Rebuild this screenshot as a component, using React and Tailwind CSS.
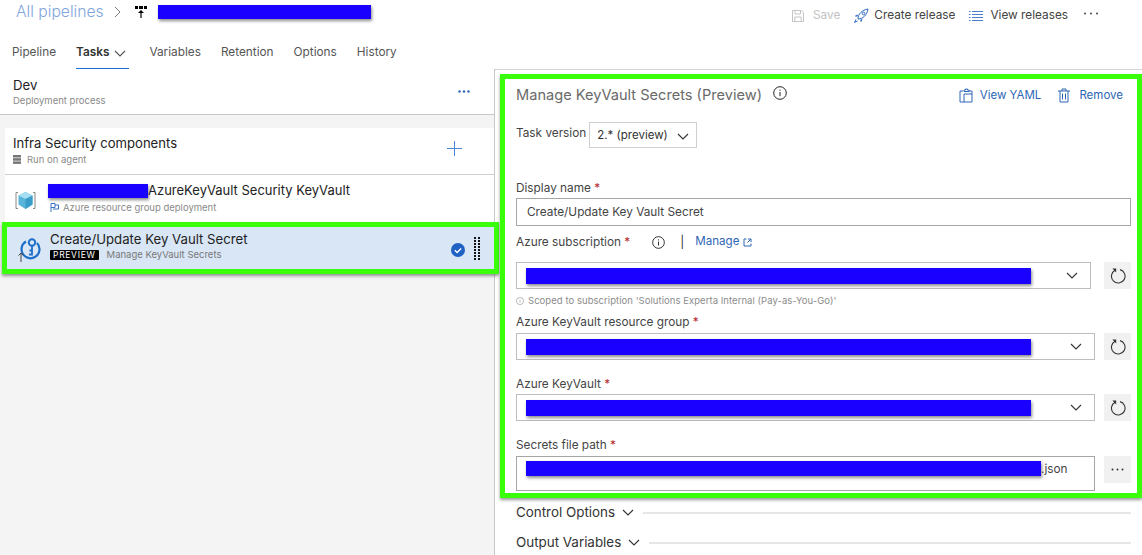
import React from "react";

const Bar = ({ w, h = "h-[16px]", className = "" }) => (
  <span className={`inline-block shrink-0 bg-[#1a00ff] shadow-[1px_2px_3px_rgba(0,0,0,0.45)] ${h} ${className}`} style={{ width: w }} />
);

const Chevron = ({ className = "", color = "#333" }) => (
  <svg width="12" height="7" viewBox="0 0 12 7" className={className} fill="none" stroke={color} strokeWidth="1.1">
    <path d="M1 1l5 5 5-5" />
  </svg>
);

const Info = ({ size = 14, color = "#222", className = "" }) => (
  <svg width={size} height={size} viewBox="0 0 14 14" className={className} fill="none" stroke={color} strokeWidth="1">
    <circle cx="7" cy="7" r="6.3" />
    <path d="M7 6v4.2M7 3.6v1.2" />
  </svg>
);

const Refresh = () => (
  <svg width="16" height="16" viewBox="0 0 16 16" fill="none" stroke="#333" strokeWidth="1.1">
    <path d="M5 2.200A6.800 6.800 0 1 0 10 1.600" />
    <path d="M2.400 0.600l3.800 0 0 3.800z" fill="#333" stroke="none" />
  </svg>
);

const Req = () => <span className="text-[#b3262a]"> *</span>;

const Label = ({ children, className = "" }) => (
  <div className={`text-[11.8px] leading-[16px] text-[#444] ${className}`}>{children}</div>
);

const SelectBox = ({ w, bar = 505 }) => (
  <div className="flex items-center h-[27px] border border-[#bdbdbd] pl-[9px] pr-[12px]" style={{ width: w }}>
    <Bar w={bar} />
    <Chevron className="ml-auto" />
  </div>
);

const SideBtn = ({ children }) => (
  <div className="ml-auto flex items-center justify-center w-[27px] h-[27px] bg-[#f1f1f1]">{children}</div>
);

const SelectRow = ({ w }) => (
  <div className="flex w-[615px]">
    <SelectBox w={w} />
    <SideBtn><Refresh /></SideBtn>
  </div>
);

const Section = ({ label, className = "" }) => (
  <div className={`flex items-center pl-[21px] pr-[11px] ${className}`}>
    <span className="text-[13.4px] leading-[18px] text-[#333]">{label}</span>
    <Chevron className="ml-[7px]" />
    <span className="flex-1 h-[2px] bg-[#e6e6e6] ml-[9px] mt-[2px]" />
  </div>
);

const Tab = ({ children, active }) => (
  <div className={`h-[39px] flex items-center pt-[8px] text-[11.8px] ${active ? "font-semibold text-[#333] border-b border-[#1f6fd1]" : "text-[#555] border-b border-transparent"}`}>
    {children}
  </div>
);

export default function App() {
  return (
    <div className="relative w-[1142px] h-[555px] overflow-hidden bg-white flex flex-col [font-family:Inter,'Liberation_Sans',sans-serif]">
      {/* breadcrumb bar */}
      <div className="flex items-center h-[30px] shrink-0 pl-[16px] pb-[6px]">
        <span className="text-[15.700px] font-light text-[#7fa6dc]">All pipelines</span>
        <svg width="7" height="12" viewBox="0 0 7 12" className="ml-[10px]" fill="none" stroke="#777" strokeWidth="1"><path d="M1 1l5 5-5 5" /></svg>
        <svg width="12" height="14" viewBox="0 0 12 14" className="ml-[14px]" fill="#000">
          <rect x="0" y="1" width="3" height="3" /><rect x="4" y="1" width="4" height="3" /><rect x="9" y="1" width="3" height="3" />
          <path d="M6 5l3 3H6.600v5H5.400V8H3z" />
        </svg>
        <Bar w={213} h="h-[14px]" className="ml-[11px]" />
        <div className="ml-auto flex items-center text-[11.800px] text-[#444] pr-[74px] pt-[8px] relative">
          <svg width="14" height="14" viewBox="0 0 14 14" fill="none" stroke="#c4c4c4" strokeWidth="1"><path d="M1.500 1.500h9l2 2v9h-11z" /><path d="M4 1.500v3.500h5.500v-3.500M3.800 12.500V8h6.400v4.500" /></svg>
          <span className="ml-[8px] text-[#c2c2c2]">Save</span>
          <svg width="16" height="16" viewBox="0 0 16 16" className="ml-[13px]" fill="none" stroke="#2f6bc4" strokeWidth="1"><path d="M5 11c0-5 4-9 10-10-1 6-5 10-10 10zM5 7l-2.500 1 2 0M9 11l-1 2.500 0-2M3 11.500l-1.500 3 3-1.500" /><circle cx="10.500" cy="5.500" r="1.300" /></svg>
          <span className="ml-[5px]">Create release</span>
          <svg width="14" height="12" viewBox="0 0 14 12" className="ml-[14px]" stroke="#4a7fd0" strokeWidth="1.200"><path d="M0 1.500h1.500M3 1.500h11M0 4.500h1.500M3 4.500h11M0 7.500h1.500M3 7.500h11M0 10.500h1.500M3 10.500h11" /></svg>
          <span className="ml-[7px]">View releases</span>
          <svg width="16" height="3" viewBox="0 0 16 3" className="absolute right-[43px] top-[13px]" fill="#444"><circle cx="2" cy="1.500" r="1" /><circle cx="8" cy="1.500" r="1" /><circle cx="14" cy="1.500" r="1" /></svg>
        </div>
      </div>

      {/* tabs */}
      <div className="flex items-center gap-[20px] h-[39px] shrink-0 pl-[12px]">
        <Tab>Pipeline</Tab>
        <Tab active>
          <span>Tasks</span>
          <Chevron className="ml-[5px] mr-[3px]" color="#555" />
        </Tab>
        <Tab>Variables</Tab>
        <Tab>Retention</Tab>
        <Tab>Options</Tab>
        <Tab>History</Tab>
      </div>

      {/* body */}
      <div className="flex flex-1 min-h-0">
        {/* left */}
        <div className="w-[495px] shrink-0 flex flex-col bg-[#f4f4f4] border-r border-[#c8c8c8]">
          <div className="flex items-center h-[46px] shrink-0 bg-white border-b border-[#c8c8c8] pl-[13px] pr-[24px]">
            <div>
              <div className="text-[13.200px] leading-[18px] text-[#222]">Dev</div>
              <div className="text-[9.500px] leading-[13px] text-[#8a8a8a]">Deployment process</div>
            </div>
            <svg width="12" height="3" viewBox="0 0 12 3" className="ml-auto" fill="#2b63b5"><circle cx="1.500" cy="1.500" r="1.200" /><circle cx="6" cy="1.500" r="1.200" /><circle cx="10.500" cy="1.500" r="1.200" /></svg>
          </div>

          <div className="mt-[13px] ml-[5px] bg-white flex flex-col">
            <div className="flex items-center h-[47px] border-b border-[#cfcfcf] pl-[8px] pr-[32px]">
              <div className="mt-[-2px]">
                <div className="text-[13.100px] leading-[18px] text-[#222]">Infra Security components</div>
                <div className="flex items-center mt-[1px] text-[9.500px] leading-[13px] text-[#8a8a8a]">
                  <svg width="8" height="9" viewBox="0 0 8 9" fill="#777"><rect y="0" width="8" height="2.500" /><rect y="3.200" width="8" height="2.500" /><rect y="6.400" width="8" height="2.500" /></svg>
                  <span className="ml-[6px]">Run on agent</span>
                </div>
              </div>
              <svg width="15" height="15" viewBox="0 0 15 15" className="ml-auto mt-[-6px]" stroke="#4a86d8" strokeWidth="1"><path d="M7.500 0v15M0 7.500h15" /></svg>
            </div>
            <div className="flex items-center h-[47px] pl-[10px]">
              <svg width="21" height="21" viewBox="0 0 21 21" fill="none" className="mt-[3px]">
                <path d="M3 2.500H1v16h2M18 2.500h2v16h-2" stroke="#888" strokeWidth="1" />
                <path d="M10.500 2l7 3.500v9l-7 4.500-7-4.500v-9z" fill="#59b4d9" />
                <path d="M10.500 2l7 3.500-7 3.500-7-3.500z" fill="#a6dff2" />
                <path d="M10.500 9l7-3.500v9l-7 4.500z" fill="#3a9cc8" />
              </svg>
              <div className="ml-[12px] mt-[-1px]">
                <div className="flex items-center text-[13px] leading-[17px] text-[#222]">
                  <Bar w={100} h="h-[14px]" />
                  <span>AzureKeyVault Security KeyVault</span>
                </div>
                <div className="flex items-center mt-[2px] text-[9.500px] leading-[13px] text-[#8a8a8a] ml-[2px]">
                  <svg width="9" height="9" viewBox="0 0 9 9" fill="none" stroke="#3b71c2" strokeWidth="1"><path d="M1 9V.500h4v4H1M5 2h3.500v4H3" /></svg>
                  <span className="ml-[4px]">Azure resource group deployment</span>
                </div>
              </div>
            </div>
          </div>

          {/* selected row with highlight */}
          <div className="ml-[2px] mr-[-5px] relative z-10 h-[52px] shrink-0 border-[5px] border-[#39ff0b] bg-[#d8e6f5] shadow-[0_2px_3px_rgba(0,0,0,0.4)] flex items-center pl-[10px] pr-[13px]">
            <svg width="26" height="26" viewBox="0 0 26 26" fill="none" className="mt-[2px] shrink-0">
              <path d="M9 5.500A9 9 0 1 0 20 7" stroke="#1f6fc9" strokeWidth="2.200" />
              <circle cx="15" cy="6.500" r="3.200" stroke="#1f6fc9" strokeWidth="2" />
              <path d="M15 10v8.500h-3M15 14.500h-2.500" stroke="#1f6fc9" strokeWidth="1.800" />
              <path d="M4 26V17M1.500 19.500L4 17l2.500 2.500" stroke="#444" strokeWidth="1" />
            </svg>
            <div className="ml-[7px] mt-[-4px]">
              <div className="text-[13.200px] leading-[17px] text-[#222]">Create/Update Key Vault Secret</div>
              <div className="flex items-center mt-[1px]">
                <span className="bg-black text-white text-[8.500px] leading-[10px] px-[3px] rounded-[1px] tracking-[0.7px]">PREVIEW</span>
                <span className="ml-[8px] text-[9.500px] leading-[12px] text-[#787878]">Manage KeyVault Secrets</span>
              </div>
            </div>
            <svg width="14" height="14" viewBox="0 0 14 14" className="ml-auto mr-[9px] mt-[3px]">
              <circle cx="7" cy="7" r="7" fill="#1f62c4" />
              <path d="M3.800 7.200l2.300 2.200 4-4" fill="none" stroke="#fff" strokeWidth="1.400" />
            </svg>
            <svg width="7" height="24" viewBox="0 0 7 24" fill="#111" className="mt-[2px]">
              {[0, 3, 6, 9, 12, 15, 18, 21].map((y) => (
                <g key={y}><rect x="0" y={y} width="2" height="2" /><rect x="4" y={y} width="2" height="2" /></g>
              ))}
            </svg>
          </div>
        </div>

        {/* right */}
        <div className="flex-1 min-w-0 flex flex-col border-t border-[#d4d4d4] mt-0">
          <div className="relative z-20 ml-[5px] mt-[4px] h-[424px] shrink-0 border-[5px] border-[#39ff0b] shadow-[0_2px_3px_rgba(0,0,0,0.4)] bg-white pl-[11px] pr-[6px]">
            <div className="flex items-center h-[23px] mt-[5px]">
              <span className="text-[14.600px] text-[#6a6a6a]">Manage KeyVault Secrets (Preview)</span>
              <Info className="ml-[11px] mt-[-5px]" />
              <div className="ml-auto flex items-center text-[11.500px] text-[#2e66b5] pr-[8px]">
                <svg width="14" height="15" viewBox="0 0 14 15" fill="none" stroke="#2e66b5" strokeWidth="1"><path d="M4 3H1v11h12V3h-3M5 14V6h8M5 3.500V2h1.500V1h2v1H10v1.500H5z" /></svg>
                <span className="ml-[7px]">View YAML</span>
                <svg width="12" height="15" viewBox="0 0 12 15" className="ml-[17px]" fill="none" stroke="#2e66b5" strokeWidth="1"><path d="M0 3h12M2 3v11h8V3M4 3V1h4v2M4.500 5.500v6M7.500 5.500v6" /></svg>
                <span className="ml-[9px]">Remove</span>
              </div>
            </div>

            <div className="flex mt-[15px]">
              <Label className="mt-[3px]">Task version</Label>
              <div className="ml-[3px] flex items-center w-[108px] h-[26px] border border-[#cfcfcf] pl-[7px] pr-[7px] pt-[2px] text-[11.500px] text-[#333]">
                2.* (preview)
                <Chevron className="ml-auto" />
              </div>
            </div>

            <Label className="mt-[32px]">Display name<Req /></Label>
            <div className="mt-[2px] flex items-center h-[28px] w-[615px] border border-[#a6a6a6] pl-[10px] pt-[1px] text-[11.800px] text-[#444]">Create/Update Key Vault Secret</div>

            <div className="flex items-center mt-[8px] h-[16px]">
              <Label>Azure subscription<Req /></Label>
              <Info size={13} className="ml-[22px]" />
              <span className="ml-[15px] text-[12px] text-[#333]">|</span>
              <span className="ml-[11px] text-[11.600px] text-[#2e66b5]">Manage</span>
              <svg width="9" height="9" viewBox="0 0 9 9" className="ml-[4px]" fill="none" stroke="#2e66b5" strokeWidth="1"><path d="M3.500 1H1v7h7V5.500M5 1h3v3M8 1L4.500 4.500" /></svg>
            </div>
            <div className="mt-[12px]"><SelectRow w={575} /></div>
            <div className="flex items-center mt-[6px] text-[9.500px] leading-[12px] text-[#8c8c8c]">
              <Info size={8} color="#8c8c8c" />
              <span className="ml-[4px] tracking-[0.05px]">Scoped to subscription 'Solutions Experta Internal (Pay-as-You-Go)'</span>
            </div>
            <Label className="mt-[7px]">Azure KeyVault resource group<Req /></Label>
            <div className="mt-[3px]"><SelectRow w={579} /></div>
            <Label className="mt-[16px]">Azure KeyVault<Req /></Label>
            <div className="mt-[2px]"><SelectRow w={579} /></div>
            <Label className="mt-[16px]">Secrets file path<Req /></Label>
            <div className="flex w-[615px] mt-[3px]">
              <div className="flex items-start h-[35px] w-[579px] border border-[#a6a6a6] pl-[9px] pt-[4px] text-[11.800px] leading-[16px] text-[#444]">
                <Bar w={515} h="h-[15px]" />
                <span>.json</span>
              </div>
              <SideBtn>
                <svg width="13" height="3" viewBox="0 0 13 3" fill="#333"><circle cx="1.500" cy="1.500" r="1" /><circle cx="6.500" cy="1.500" r="1" /><circle cx="11.500" cy="1.500" r="1" /></svg>
              </SideBtn>
            </div>
          </div>
          <Section label="Control Options" className="mt-[5px]" />
          <Section label="Output Variables" className="mt-[12px]" />
        </div>
      </div>
    </div>
  );
}
